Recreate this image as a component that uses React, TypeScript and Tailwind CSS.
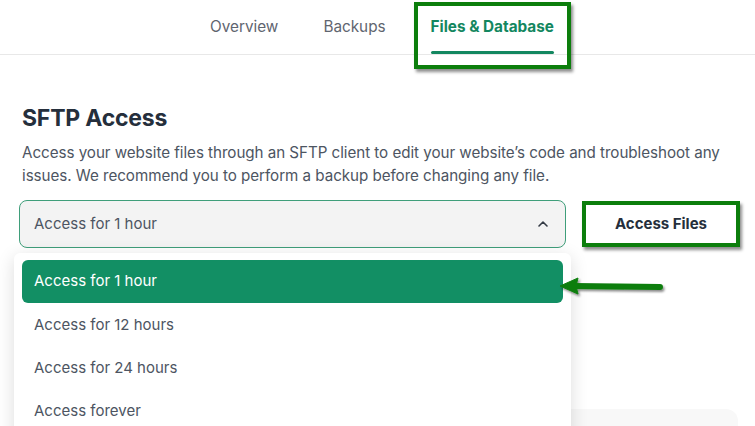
import React from 'react';

// ─── helpers ────────────────────────────────────────────────────────────────
const FONT = "font-['Inter','Liberation_Sans',sans-serif]";

const tabs = ['Overview', 'Backups', 'Files & Database'];
const options = ['Access for 1 hour', 'Access for 12 hours', 'Access for 24 hours', 'Access forever'];

// ─── Tabs header ────────────────────────────────────────────────────────────
function TabBar() {
  return (
    <div className="relative h-[55px] border-b border-[#e8e8e8]">
      <div className="flex h-full items-stretch gap-[45px] pl-[210px]">
        {tabs.map((t, i) => {
          const active = i === tabs.length - 1;
          return (
            <div key={t} className="relative flex items-start pt-[16px]">
              <span
                className={
                  active
                    ? 'text-[15.3px] font-bold leading-[22px] text-[#138760]'
                    : 'text-[15.3px] leading-[22px] text-[#5f6570]'
                }
              >
                {t}
              </span>
              {active && (
                <div className="absolute bottom-[0px] left-0 right-0 h-[3px] rounded-full bg-[#138760]" />
              )}
            </div>
          );
        })}
      </div>
      {/* annotation box */}
      <div className="pointer-events-none absolute left-[414px] top-[2px] h-[67px] w-[157px] border-[4px] border-[#0c7e0c] shadow-[2px_3px_3px_rgba(0,0,0,0.45)]" />
    </div>
  );
}

// ─── Dropdown ───────────────────────────────────────────────────────────────
function Dropdown() {
  return (
    <div className="absolute left-[14px] top-[253px] h-[200px] w-[557px] rounded-t-[6px] bg-white px-[8px] pt-[7px] shadow-[0_4px_18px_rgba(0,0,0,0.14)]">
      {options.map((o, i) => (
        <div
          key={o}
          className={
            i === 0
              ? 'flex h-[43px] items-center rounded-[6px] bg-[#128f64] px-[12px] text-[15px] text-white'
              : 'flex h-[43px] items-center px-[12px] pt-[1px] text-[15px] text-[#4d5562]'
          }
        >
          {o}
        </div>
      ))}
    </div>
  );
}

function Arrow() {
  return (
    <svg className="absolute left-[552px] top-[274px]" width="118" height="26" viewBox="0 0 118 26">
      <defs>
        <filter id="sh" x="-10%" y="-50%" width="130%" height="200%">
          <feDropShadow dx="1.5" dy="2" stdDeviation="1.2" floodColor="#000" floodOpacity="0.45" />
        </filter>
      </defs>
      <g filter="url(#sh)" fill="#0c7e0c" stroke="#0c7e0c">
        <path d="M22 12 L108 13" strokeWidth="6" strokeLinecap="round" fill="none" />
        <path d="M8 12 L26 4 L24 12 L26 20 Z" strokeWidth="1" strokeLinejoin="round" />
      </g>
    </svg>
  );
}

// ─── Main export ────────────────────────────────────────────────────────────
export default function App() {
  return (
    <div className={`relative h-[426px] w-[755px] overflow-hidden bg-white ${FONT}`}>
      <TabBar />

      <div className="pl-[22px] pr-[6px] pt-[47px]">
        <h1 className="text-[23px] font-bold leading-[32px] tracking-[-0.2px] text-[#252f3c]">SFTP Access</h1>
        <p className="mt-[7px] text-[15.2px] leading-[23px] tracking-[-0.05px] text-[#4d5562]">
          Access your website files through an SFTP client to edit your website’s code and troubleshoot any
          issues. We recommend you to perform a backup before changing any file.
        </p>
      </div>

      <div className="ml-[19px] mt-[13px] flex items-center gap-[16px]">
        <div className="flex h-[48px] w-[547px] items-center justify-between rounded-[8px] border border-[#3f9e7a] bg-[#f3f3f3] pl-[14px] pr-[16px]">
          <span className="text-[15px] text-[#4d5562]">Access for 1 hour</span>
          <svg width="12" height="8" viewBox="0 0 12 8" className="mt-[-1px]">
            <path d="M2 6 L6 2 L10 6" fill="none" stroke="#333a44" strokeWidth="1.6" strokeLinecap="round" strokeLinejoin="round" />
          </svg>
        </div>
        <button className="flex h-[46px] w-[158px] items-center justify-center border-[4px] border-[#0c7e0c] bg-white text-[15px] font-bold text-[#252f3c] shadow-[2px_3px_3px_rgba(0,0,0,0.45)]">
          Access Files
        </button>
      </div>

      <div className="ml-[19px] mr-[17px] mt-[161px] h-[60px] rounded-[12px] bg-[#f8f8f8]" />

      <Dropdown />
      <Arrow />
    </div>
  );
}
